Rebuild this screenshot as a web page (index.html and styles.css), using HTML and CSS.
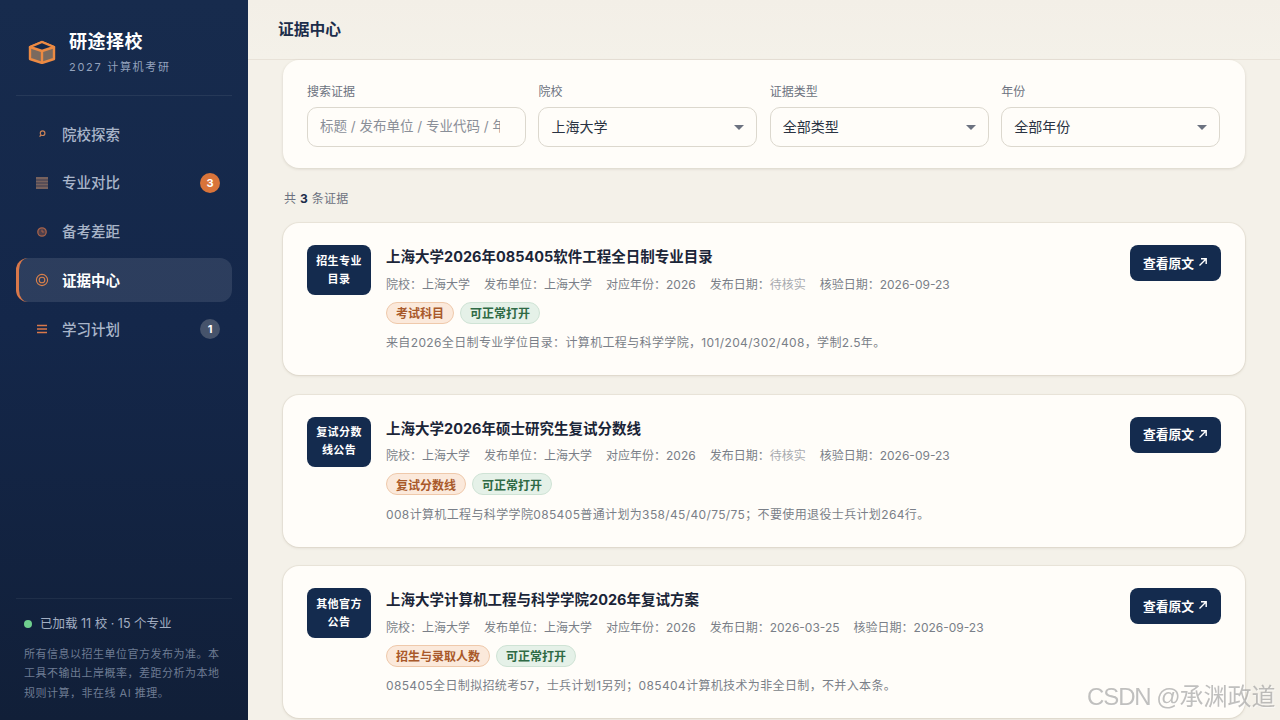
FILE: index.html
```html
<!DOCTYPE html>
<html lang="zh-CN">
<head>
<meta charset="utf-8">
<title>证据中心</title>
<link rel="stylesheet" href="styles.css">
</head>
<body>
<div class="app">
  <aside class="sidebar">
    <div class="brand">
      <svg class="logo" viewBox="0 0 28 24" width="28" height="24">
        <path d="M14 2 26 7v12l-12 4-12-4V7z" fill="#7a6a5f" stroke="#ec8a43" stroke-width="2.4" stroke-linejoin="round"/>
        <path d="M14 2 26 7l-12 4L2 7z" fill="#13284a" stroke="#ec8a43" stroke-width="2.4" stroke-linejoin="round"/>
        <path d="M14 11v12" stroke="#ec8a43" stroke-width="2.4"/>
      </svg>
      <div class="brand-text">
        <div class="brand-name">研途择校</div>
        <div class="brand-sub">2027 计算机考研</div>
      </div>
    </div>
    <nav class="nav">
      <a class="nav-item">
        <span class="nav-icon"><svg viewBox="0 0 12 12" width="12" height="12"><circle cx="6.6" cy="5.2" r="2.3" fill="none" stroke="#c98257" stroke-width="1.2"/><path d="M5 7 3.6 8.6" stroke="#c98257" stroke-width="1.2"/></svg></span>
        <span class="nav-label">院校探索</span>
      </a>
      <a class="nav-item">
        <span class="nav-icon"><svg viewBox="0 0 12 12" width="12" height="12"><rect x="0" y="0" width="12" height="12" fill="#77625e"/><path d="M0 3h12M0 6h12M0 9h12" stroke="#3a3a50" stroke-width="1"/></svg></span>
        <span class="nav-label">专业对比</span>
        <span class="badge badge-orange">3</span>
      </a>
      <a class="nav-item">
        <span class="nav-icon"><svg viewBox="0 0 12 12" width="12" height="12"><circle cx="6" cy="6" r="4.2" fill="#4d3f4c" stroke="#a8634a" stroke-width="1.3"/><path d="M6 3.6V6h2.2" fill="none" stroke="#a8634a" stroke-width="1"/></svg></span>
        <span class="nav-label">备考差距</span>
      </a>
      <a class="nav-item active">
        <span class="nav-icon"><svg viewBox="0 0 14 14" width="14" height="14"><circle cx="7" cy="7" r="5.6" fill="none" stroke="#d9804a" stroke-width="1.1"/><circle cx="7" cy="7" r="2.8" fill="none" stroke="#d9804a" stroke-width="1.1"/></svg></span>
        <span class="nav-label">证据中心</span>
      </a>
      <a class="nav-item">
        <span class="nav-icon"><svg viewBox="0 0 12 12" width="12" height="12"><path d="M1 2.5h10M1 6h10M1 9.5h10" stroke="#d9784a" stroke-width="1.6"/></svg></span>
        <span class="nav-label">学习计划</span>
        <span class="badge badge-gray">1</span>
      </a>
    </nav>
    <div class="side-foot">
      <div class="status"><span class="dot"></span>已加载 11 校 · 15 个专业</div>
      <p class="disclaimer">所有信息以招生单位官方发布为准。本工具不输出上岸概率，差距分析为本地规则计算，非在线 AI 推理。</p>
    </div>
  </aside>
  <main class="main">
    <header class="topbar"><h1 class="page-title">证据中心</h1></header>
    <div class="content">
      <section class="filters">
        <label class="field"><span class="field-label">搜索证据</span>
          <input class="control search" type="text" placeholder="标题 / 发布单位 / 专业代码 / 年份">
        </label>
        <label class="field"><span class="field-label">院校</span>
          <span class="select-wrap"><select class="control"><option>上海大学</option></select></span>
        </label>
        <label class="field"><span class="field-label">证据类型</span>
          <span class="select-wrap"><select class="control"><option>全部类型</option></select></span>
        </label>
        <label class="field"><span class="field-label">年份</span>
          <span class="select-wrap"><select class="control"><option>全部年份</option></select></span>
        </label>
      </section>
      <div class="count">共 <b>3</b> 条证据</div>
      <article class="card">
        <div class="type-badge">招生专业目录</div>
        <div class="card-body">
          <h2 class="card-title">上海大学2026年085405软件工程全日制专业目录</h2>
          <div class="meta"><span>院校：上海大学</span><span>发布单位：上海大学</span><span>对应年份：2026</span><span>发布日期：<i class="muted">待核实</i></span><span>核验日期：2026-09-23</span></div>
          <div class="tags"><span class="tag tag-orange">考试科目</span><span class="tag tag-green">可正常打开</span></div>
          <p class="summary">来自2026全日制专业学位目录：计算机工程与科学学院，101/204/302/408，学制2.5年。</p>
        </div>
        <a class="btn">查看原文<svg class="arrow" viewBox="0 0 10 10" width="10" height="10"><path d="M1.5 8.5 8 2M3 1.8h5.2V7" fill="none" stroke="#fff" stroke-width="1.4"/></svg></a>
      </article>
      <article class="card">
        <div class="type-badge">复试分数线公告</div>
        <div class="card-body">
          <h2 class="card-title">上海大学2026年硕士研究生复试分数线</h2>
          <div class="meta"><span>院校：上海大学</span><span>发布单位：上海大学</span><span>对应年份：2026</span><span>发布日期：<i class="muted">待核实</i></span><span>核验日期：2026-09-23</span></div>
          <div class="tags"><span class="tag tag-orange">复试分数线</span><span class="tag tag-green">可正常打开</span></div>
          <p class="summary">008计算机工程与科学学院085405普通计划为358/45/40/75/75；不要使用退役士兵计划264行。</p>
        </div>
        <a class="btn">查看原文<svg class="arrow" viewBox="0 0 10 10" width="10" height="10"><path d="M1.5 8.5 8 2M3 1.8h5.2V7" fill="none" stroke="#fff" stroke-width="1.4"/></svg></a>
      </article>
      <article class="card">
        <div class="type-badge">其他官方公告</div>
        <div class="card-body">
          <h2 class="card-title">上海大学计算机工程与科学学院2026年复试方案</h2>
          <div class="meta"><span>院校：上海大学</span><span>发布单位：上海大学</span><span>对应年份：2026</span><span>发布日期：2026-03-25</span><span>核验日期：2026-09-23</span></div>
          <div class="tags"><span class="tag tag-orange">招生与录取人数</span><span class="tag tag-green">可正常打开</span></div>
          <p class="summary">085405全日制拟招统考57，士兵计划1另列；085404计算机技术为非全日制，不并入本条。</p>
        </div>
        <a class="btn">查看原文<svg class="arrow" viewBox="0 0 10 10" width="10" height="10"><path d="M1.5 8.5 8 2M3 1.8h5.2V7" fill="none" stroke="#fff" stroke-width="1.4"/></svg></a>
      </article>
    </div>
  </main>
</div>
<div class="watermark"><span class="wm-latin">CSDN @</span>承渊政道</div>
</body>
</html>
```
FILE: styles.css
```css
* { box-sizing: border-box; }
html, body { margin: 0; height: 100%; overflow: hidden; }
body { font-family: Inter, "Noto Sans CJK SC", "Noto Sans", sans-serif; color: #1c2a44; background: #f4f1e9; }
.app { display: flex; height: 720px; }

.sidebar { width: 248px; flex: none; display: flex; flex-direction: column; padding: 0 16px; background: linear-gradient(180deg, #172b4d 0%, #14274a 45%, #111f38 100%); }
.brand { height: 96px; display: flex; align-items: center; gap: 13px; padding: 8px 0 0 12px; border-bottom: 1px solid rgba(255,255,255,.07); flex: none; }
.logo { flex: none; }
.brand-name { font-size: 18px; font-weight: 700; line-height: 26px; color: #fff; letter-spacing: .5px; }
.brand-sub { font-size: 11px; line-height: 16px; margin-top: 4px; color: #93a2bd; letter-spacing: 1.7px; }

.nav { display: flex; flex-direction: column; gap: 4.75px; margin-top: 16px; flex: 1; }
.nav-item { height: 44px; display: flex; align-items: center; padding: 0 12px 0 19px; border-radius: 12px; font-size: 14.5px; font-weight: 500; color: #a9b5c9; }
.nav-icon { width: 14px; height: 14px; display: flex; align-items: center; justify-content: center; margin-right: 13px; flex: none; }
.nav-label { flex: 1; padding-bottom: 2px; }
.nav-item.active { background: rgba(255,255,255,.105); color: #fff; font-weight: 600; border-left: 3px solid #d9784a; padding-left: 16px; }
.badge { width: 20px; height: 20px; border-radius: 50%; display: flex; align-items: center; justify-content: center; font-size: 11px; font-weight: 700; color: #fff; }
.badge-orange { background: #d9743a; }
.badge-gray { background: #46536b; }

.side-foot { border-top: 1px solid rgba(255,255,255,.06); padding: 16px 8px 17px; flex: none; }
.status { display: flex; align-items: center; font-size: 12.5px; line-height: 18px; color: #a2aec2; }
.dot { width: 8px; height: 8px; border-radius: 50%; background: #6fcf8e; margin-right: 8px; }
.disclaimer { margin: 12px 0 0; font-size: 11px; line-height: 19.5px; color: #6e7c93; letter-spacing: .5px; }

.main { flex: 1; min-width: 0; height: 720px; overflow: hidden; display: flex; flex-direction: column; }
.topbar { height: 60px; flex: none; display: flex; align-items: center; padding: 0 0 2px 30px; border-bottom: 1px solid #e8e2d8; background: linear-gradient(180deg, #f3efe7, #f4f1e9); }
.page-title { margin: 0; font-size: 15.75px; font-weight: 600; color: #1c2d4a; }
.content { padding: 0 35px; }

.filters { height: 108px; display: grid; grid-template-columns: repeat(4, 219px); gap: 12.4px; padding: 24px 24px 0; background: #fffdf9; border-radius: 16px; box-shadow: 0 1px 3px rgba(90,75,50,.18); }
.field { display: flex; flex-direction: column; }
.field-label { font-size: 12px; line-height: 16px; color: #6c7280; margin-bottom: 7px; }
.control { width: 100%; height: 40px; border: 1px solid #dcd8ce; border-radius: 10px; background: #fffdf9; padding: 0 12px 2px; font: inherit; font-size: 14px; color: #2a3342; appearance: none; outline: none; }
.search { padding-right: 25px; font-size: 13.5px; }
.search::placeholder { color: #8a8f98; }
.select-wrap { position: relative; display: block; }
.select-wrap::after { content: ""; position: absolute; right: 13px; top: 18px; border-left: 5px solid transparent; border-right: 5px solid transparent; border-top: 5px solid #6c7280; pointer-events: none; }

.count { font-size: 12px; line-height: 18px; color: #6c7280; margin: 22px 0 15px 1px; letter-spacing: .3px; }
.count b { color: #1c2d4a; font-weight: 700; }

.card { height: 152px; margin-bottom: 19.5px; display: flex; align-items: flex-start; gap: 15px; padding: 22px 24px; background: #fffdf9; border-radius: 16px; box-shadow: 0 0 0 1px rgba(200,190,170,.2), 0 1px 3px rgba(90,75,50,.14); }
.type-badge { width: 64px; height: 50px; flex: none; display: flex; align-items: center; justify-content: center; padding: 0 8px 1px; text-align: center; background: #142b4e; color: #fff; border-radius: 8px; font-size: 11px; font-weight: 600; line-height: 18px; letter-spacing: .4px; }
.card-body { flex: 1; min-width: 0; }
.card-title { margin: 0; font-size: 14.5px; font-weight: 700; line-height: 24px; color: #1b2538; }
.meta { display: flex; gap: 14px; margin-top: 6.5px; font-size: 12px; line-height: 18px; color: #7a7f88; }
.muted { font-style: normal; color: #a9abb0; }
.tags { display: flex; gap: 6px; margin-top: 8px; }
.tag { height: 22px; display: flex; align-items: center; padding: 0 9px; border-radius: 11px; font-size: 12px; font-weight: 600; border: 1px solid; }
.tag-orange { background: #fbe9db; border-color: #efc9ab; color: #a9592a; }
.tag-green { background: #e5f1e8; border-color: #cfe3d5; color: #2f6a45; }
.summary { margin: 10.5px 0 0; font-size: 12px; line-height: 18px; color: #7a7f88; letter-spacing: .36px; }
.btn { width: 91px; height: 36px; flex: none; display: flex; align-items: center; justify-content: center; gap: 4px; padding-bottom: 2px; background: #142b4e; color: #fff; border-radius: 8px; font-size: 12.75px; font-weight: 600; }
.arrow { flex: none; }

.watermark { position: fixed; left: 1087px; top: 681px; font-family: "Liberation Sans", "Noto Sans CJK SC", sans-serif; font-size: 24px; line-height: 32px; color: rgba(140,140,140,.55); text-shadow: 1px 1px 1px rgba(255,255,255,.6); white-space: nowrap; }
.wm-latin { letter-spacing: -1.1px; }
```
